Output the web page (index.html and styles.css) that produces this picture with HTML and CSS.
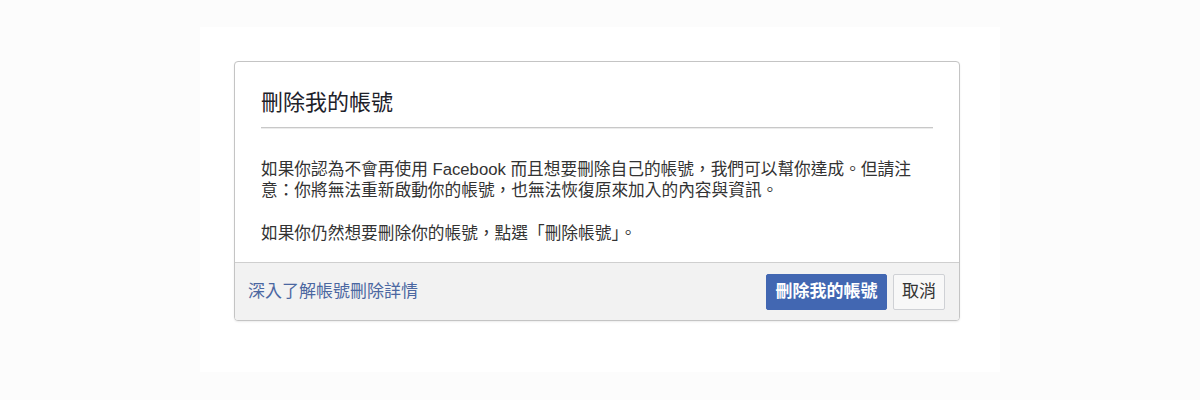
FILE: index.html
```html
<!DOCTYPE html>
<html lang="zh-Hant">
<head>
<meta charset="utf-8">
<title>刪除我的帳號</title>
<link rel="stylesheet" href="styles.css">
</head>
<body>
<div class="stage">
  <div class="dialog">
    <div class="header">
      <h2 class="title">刪除我的帳號</h2>
    </div>
    <div class="content">
      <p class="para">如果你認為不會再使用 Facebook 而且想要刪除自己的帳號，我們可以幫你達成。但請注意：你將無法重新啟動你的帳號，也無法恢復原來加入的內容與資訊。</p>
      <p class="para">如果你仍然想要刪除你的帳號，點選「刪除帳號」。</p>
    </div>
    <div class="footer">
      <a class="link" href="#">深入了解帳號刪除詳情</a>
      <div class="actions">
        <button class="btn btn-primary" type="button">刪除我的帳號</button>
        <button class="btn btn-cancel" type="button">取消</button>
      </div>
    </div>
  </div>
</div>
</body>
</html>
```

FILE: styles.css
```css
html, body {
  margin: 0;
  padding: 0;
}
body {
  background: #fcfcfc;
  width: 1200px;
  height: 400px;
  overflow: hidden;
  font-family: "Liberation Sans", "Noto Sans CJK TC", sans-serif;
  color: #333;
}
.stage {
  margin-left: 200px;
  margin-top: 27px;
  width: 800px;
  height: 345px;
  background: #ffffff;
  padding-top: 34px;
  box-sizing: border-box;
  padding-left: 34px;
}
.dialog {
  width: 726px;
  height: 260px;
  box-sizing: border-box;
  border: 1px solid #c4c4c4;
  border-radius: 4px;
  background: #fff;
  box-shadow: 0 1px 2px rgba(0,0,0,0.08);
  display: flex;
  flex-direction: column;
  overflow: hidden;
}
.header {
  padding: 27px 26px 0 26px;
}
.title {
  margin: 0;
  font-size: 22px;
  line-height: 28px;
  font-weight: normal;
  color: #1d2129;
  padding-bottom: 10px;
  border-bottom: 1px solid #c8c8c8;
  box-shadow: 0 1px 0 #ececec;
}
.content {
  padding: 31px 26px 0 26px;
  flex: 1;
}
.para {
  margin: 0 0 22px 0;
  font-size: 16.7px;
  line-height: 21px;
  color: #333;
}
.para:last-child {
  margin-bottom: 0;
}
.footer {
  height: 58px;
  box-sizing: border-box;
  background: #f2f2f2;
  border-top: 1px solid #cfcfcf;
  display: flex;
  align-items: center;
  justify-content: space-between;
  padding: 0 14px 0 13px;
}
.link {
  color: #4b67a1;
  text-decoration: none;
  font-size: 17px;
  line-height: 22px;
}
.actions {
  display: flex;
  gap: 6px;
  align-items: center;
}
.btn {
  height: 36px;
  box-sizing: border-box;
  font-family: "Liberation Sans", "Noto Sans CJK TC", sans-serif;
  font-size: 17px;
  line-height: 20px;
  border-radius: 2px;
  padding: 0 10px;
  cursor: pointer;
}
.btn-primary {
  width: 121px;
  background: #4267b2;
  border: 1px solid #4267b2;
  color: #fff;
  font-weight: bold;
  padding: 0;
}
.btn-cancel {
  width: 52px;
  padding: 0;
  background: #f8f8f8;
  border: 1px solid #cfd1d5;
  color: #333;
}
```
